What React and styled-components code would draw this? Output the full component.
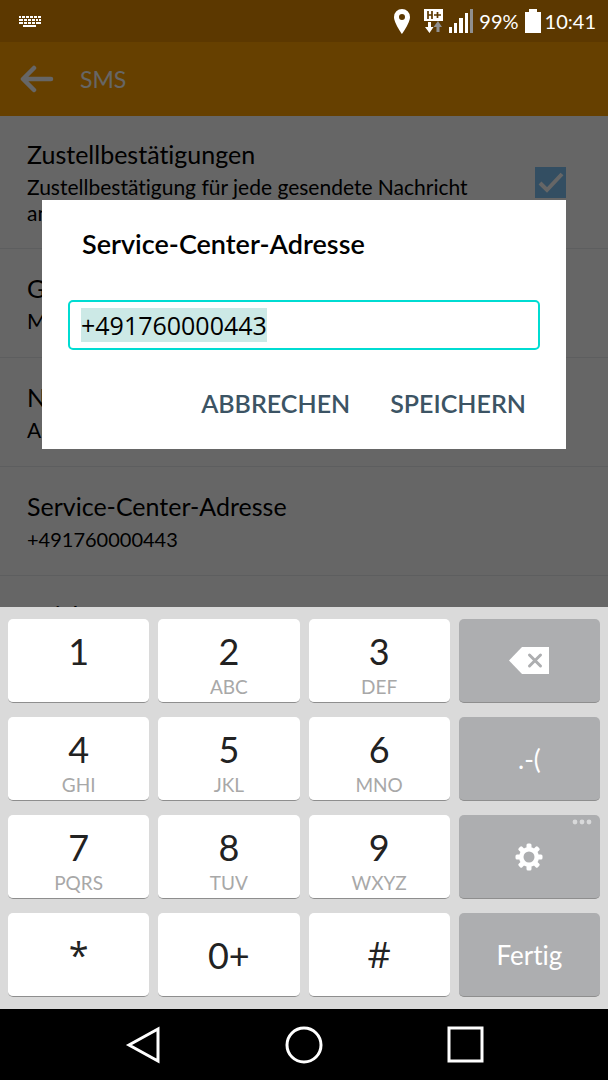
import React, { useEffect, useRef } from "react";
import styled, { createGlobalStyle } from "styled-components";

const GlobalStyle = createGlobalStyle`
  * {
    box-sizing: border-box;
  }

  body {
    margin: 0;
    font-family: Lato, "Open Sans", sans-serif;
    font-variant-ligatures: none;
    color: #000;
    background: #000;
  }

  button {
    font-family: inherit;
    font-variant-ligatures: none;
    border: 0;
    padding: 0;
    background: none;
    cursor: pointer;
  }
`;

const Phone = styled.div`
  display: flex;
  flex-direction: column;
  height: 100vh;
`;

const StatusBar = styled.header`
  display: flex;
  align-items: center;
  flex: none;
  height: 42px;
  padding: 0 12px 0 18px;
  color: #fff;
  background: #5c3800;
  font-size: 20px;
`;

const StatusIcons = styled.div`
  display: flex;
  align-items: center;
  gap: 6px;
  margin-left: auto;
`;

const Location = styled.span`
  display: flex;
  margin-right: 8px;
`;

const Clock = styled.time`
  margin-left: -2px;
`;

const Screen = styled.main`
  position: relative;
  flex: 1;
  min-height: 0;
  overflow: hidden;
  background: #fff;
`;

const AppBar = styled.div`
  display: flex;
  align-items: center;
  gap: 26px;
  height: 74px;
  padding: 0 20px;
  color: #fff;
  background: #ffa000;
`;

const BackButton = styled.button`
  display: flex;
  color: inherit;
`;

const AppTitle = styled.h1`
  margin: 0;
  font-size: 23px;
  font-weight: 400;
`;

const Setting = styled.section`
  display: flex;
  align-items: center;
  min-height: 109px;
  padding: 0 42px 0 27px;
  border-bottom: 1px solid #e8eced;
`;

const SettingText = styled.div`
  flex: 1;
  padding: 22px 0;
`;

const SettingTitle = styled.h2`
  margin: 0;
  font-size: 25px;
  font-weight: 400;
  line-height: 32px;
`;

const SettingValue = styled.p`
  margin: 4px 0 0;
  min-height: 26px;
  max-width: 460px;
  font-size: ${(props) => (props.$number ? 20 : 21)}px;
  line-height: 26px;
`;

const CheckBox = styled.input`
  appearance: none;
  flex: none;
  width: 31px;
  height: 31px;
  margin: 0;
  background: #7fc4f5;
`;

const CheckHolder = styled.label`
  display: grid;

  > * {
    grid-area: 1 / 1;
  }
`;

const Overlay = styled.div`
  position: absolute;
  inset: 0;
  display: flex;
  align-items: center;
  justify-content: center;
  padding: 0 42px;
  background: rgba(0, 0, 0, 0.6);
`;

const Dialog = styled.form`
  width: 100%;
  padding: 26px 26px 23px;
  background: #fff;
`;

const DialogTitle = styled.label`
  display: block;
  padding: 0 14px;
  font-size: 27px;
  font-weight: 600;
  line-height: 36px;
`;

const NumberInput = styled.input`
  display: block;
  width: 100%;
  height: 50px;
  margin: 38px 0 30px;
  padding: 0 11px;
  border: 2px solid #00dcd2;
  border-radius: 5px;
  outline: 0;
  color: #000;
  background: #fff;
  font-family: "Open Sans", "Noto Sans", sans-serif;
  font-size: 25px;

  &::selection {
    color: #000;
    background: #cce9e6;
  }
`;

const Actions = styled.div`
  display: flex;
  justify-content: flex-end;
  gap: 40px;
  padding: 0 14px;
`;

const Action = styled.button`
  height: 46px;
  color: #3c5464;
  font-size: 25px;
  font-weight: 600;
`;

const Keypad = styled.section`
  display: grid;
  grid-template-columns: repeat(4, 1fr);
  grid-auto-rows: 84px;
  gap: 14px 9px;
  flex: none;
  padding: 12px 8px;
  background: #dadada;
`;

const Key = styled.button`
  position: relative;
  display: flex;
  flex-direction: column;
  align-items: center;
  justify-content: center;
  border-radius: 5px;
  border-bottom: 1px solid #8e8e8e;
  color: ${(props) => (props.$dark ? "#fff" : "#222")};
  background: ${(props) => (props.$dark ? "#adaeb0" : "#fff")};
  font-size: ${(props) => (props.$dark ? 26 : 36)}px;
`;

const Digit = styled.span`
  margin-top: 6px;
  line-height: 46px;
`;

const Letters = styled.span`
  height: 26px;
  color: #a8a8a8;
  font-size: 19px;
  line-height: 26px;
`;

const Symbol = styled.span`
  font-family: "Open Sans", "Noto Sans", sans-serif;
`;

const MoreDots = styled.svg`
  position: absolute;
  top: 4px;
  right: 8px;
`;

const NavBar = styled.nav`
  display: flex;
  align-items: center;
  justify-content: space-between;
  flex: none;
  height: 71px;
  padding: 0 124px;
  background: #000;
`;

const NavButton = styled.button`
  display: flex;
`;

const digitKeys = {
  1: "",
  2: "ABC",
  3: "DEF",
  4: "GHI",
  5: "JKL",
  6: "MNO",
  7: "PQRS",
  8: "TUV",
  9: "WXYZ",
};

const KeyboardIcon = () => (
  <svg width="24" height="13" viewBox="0 0 24 13" stroke="#fff" strokeWidth="2">
    <path d="M1 2H3M4 2H7M8 2H11M12 2H15M16 2H19M20 2H23" />
    <path d="M1 5H5M6 5H9M10 5H13M14 5H17M18 5H20M21 5H23" />
    <path d="M1 8H5M6 8H9M10 8H13M14 8H17M18 8H23" />
    <path d="M5 11H18" />
  </svg>
);

const PinIcon = () => (
  <svg width="16" height="25" viewBox="0 0 16 25" fill="#fff">
    <path
      fillRule="evenodd"
      d="M8 0a8 8 0 0 0-8 8c0 6 8 17 8 17s8-11 8-17a8 8 0 0 0-8-8zm0 5a3 3 0 1 1 0 6 3 3 0 0 1 0-6z"
    />
  </svg>
);

const DataIcon = () => (
  <svg width="19" height="24" viewBox="0 0 19 24">
    <path fill="#fff" d="M0 0h19v12H0z" />
    <path d="M4 2v8M8 2v8M4 6h4M10 6h7M13.500 3v6" stroke="#5c3800" strokeWidth="1.700" />
    <path fill="#fff" d="M4 13h3v5h2.500L5.500 24 1 18h3z" />
    <path fill="#8f8f8f" d="M12.500 23h3v-5H18l-4-6-4.500 6h3z" />
  </svg>
);

const SignalIcon = () => (
  <svg width="24" height="24" viewBox="0 0 24 24" fill="#fff">
    <path d="M0 18h3v6H0zM5 14h3v10H5zM10 9h4v15h-4zM16 4h3v20h-3z" />
    <path fill="#8f8f8f" d="M21 0h3v24h-3z" />
  </svg>
);

const BatteryIcon = () => (
  <svg width="16" height="24" viewBox="0 0 16 24" fill="#fff">
    <path d="M4 0h8v3h4v21H0V3h4z" />
  </svg>
);

const ArrowIcon = () => (
  <svg width="34" height="28" viewBox="0 0 34 28" fill="none" stroke="currentColor" strokeWidth="4.500" strokeLinecap="round" strokeLinejoin="round">
    <path d="M14 3L3 14l11 11M4 14h27" />
  </svg>
);

const DeleteIcon = () => (
  <svg width="40" height="27" viewBox="0 0 40 27">
    <path fill="#fff" d="M13 0h27v27H13L0 13.500z" />
    <path d="M20.500 8l11 11M31.500 8l-11 11" stroke="#adaeb0" strokeWidth="3" strokeLinecap="round" />
  </svg>
);

const GearIcon = () => (
  <svg width="28" height="28" viewBox="0 0 28 28">
    <g fill="#fff">
      {[0, 45, 90, 135].map((angle) => (
        <rect key={angle} x="11.500" y="0.500" width="5" height="27" rx="1.500" transform={`rotate(${angle} 14 14)`} />
      ))}
      <circle cx="14" cy="14" r="10" />
    </g>
    <circle cx="14" cy="14" r="5.500" fill="#adaeb0" />
  </svg>
);

const SettingRow = ({ title, value, number, children }) => (
  <Setting>
    <SettingText>
      <SettingTitle>{title}</SettingTitle>
      <SettingValue $number={number}>{value}</SettingValue>
    </SettingText>
    {children}
  </Setting>
);

export default () => {
  const numberInput = useRef(null);

  useEffect(() => {
    numberInput.current.focus();
    numberInput.current.select();
  }, []);

  return (
    <Phone>
      <GlobalStyle />
      <StatusBar>
        <KeyboardIcon />
        <StatusIcons>
          <Location>
            <PinIcon />
          </Location>
          <DataIcon />
          <SignalIcon />
          <span>99%</span>
          <BatteryIcon />
          <Clock>10:41</Clock>
        </StatusIcons>
      </StatusBar>

      <Screen>
        <AppBar>
          <BackButton aria-label="Zurück">
            <ArrowIcon />
          </BackButton>
          <AppTitle>SMS</AppTitle>
        </AppBar>
        <SettingRow
          title="Zustellbestätigungen"
          value="Zustellbestätigung für jede gesendete Nachricht anfordern">
          <CheckHolder>
            <CheckBox type="checkbox" defaultChecked aria-label="Zustellbestätigungen" />
            <svg width="31" height="31" viewBox="0 0 31 31" fill="none" stroke="#fff" strokeWidth="4">
              <path d="M5 16l7 7L27 7" />
            </svg>
          </CheckHolder>
        </SettingRow>
        <SettingRow title="G" value="M" />
        <SettingRow title="N" value="Au" />
        <SettingRow title="Service-Center-Adresse" value="+491760000443" number />
        <SettingRow title="Zeichensatz" />

        <Overlay>
          <Dialog role="dialog" onSubmit={(e) => e.preventDefault()}>
            <DialogTitle htmlFor="number">Service-Center-Adresse</DialogTitle>
            <NumberInput id="number" ref={numberInput} type="tel" defaultValue="+491760000443" />
            <Actions>
              <Action type="button">ABBRECHEN</Action>
              <Action type="submit">SPEICHERN</Action>
            </Actions>
          </Dialog>
        </Overlay>
      </Screen>

      <Keypad>
        {[1, 4, 7].map((first, row) => (
          <React.Fragment key={first}>
            {[first, first + 1, first + 2].map((digit) => (
              <Key key={digit}>
                <Digit>{digit}</Digit>
                <Letters>{digitKeys[digit]}</Letters>
              </Key>
            ))}
            {row === 0 && (
              <Key $dark aria-label="Löschen">
                <DeleteIcon />
              </Key>
            )}
            {row === 1 && <Key $dark>.-(</Key>}
            {row === 2 && (
              <Key $dark aria-label="Einstellungen">
                <MoreDots width="20" height="6" viewBox="0 0 20 6" fill="#d8d9da">
                  <circle cx="3" cy="3" r="2.400" />
                  <circle cx="10" cy="3" r="2.400" />
                  <circle cx="17" cy="3" r="2.400" />
                </MoreDots>
                <GearIcon />
              </Key>
            )}
          </React.Fragment>
        ))}
        <Key>
          <Symbol>*</Symbol>
        </Key>
        <Key>0+</Key>
        <Key>
          <Symbol>#</Symbol>
        </Key>
        <Key $dark>Fertig</Key>
      </Keypad>

      <NavBar>
        <NavButton aria-label="Zurück">
          <svg width="37" height="38" viewBox="0 0 37 38" fill="none" stroke="#fff" strokeWidth="3">
            <path d="M34 3v32L5 19z" />
          </svg>
        </NavButton>
        <NavButton aria-label="Start">
          <svg width="38" height="38" viewBox="0 0 38 38" fill="none" stroke="#fff" strokeWidth="3">
            <circle cx="19" cy="19" r="17" />
          </svg>
        </NavButton>
        <NavButton aria-label="Übersicht">
          <svg width="37" height="37" viewBox="0 0 37 37" fill="none" stroke="#fff" strokeWidth="3">
            <path d="M2 2h33v33H2z" />
          </svg>
        </NavButton>
      </NavBar>
    </Phone>
  );
};
